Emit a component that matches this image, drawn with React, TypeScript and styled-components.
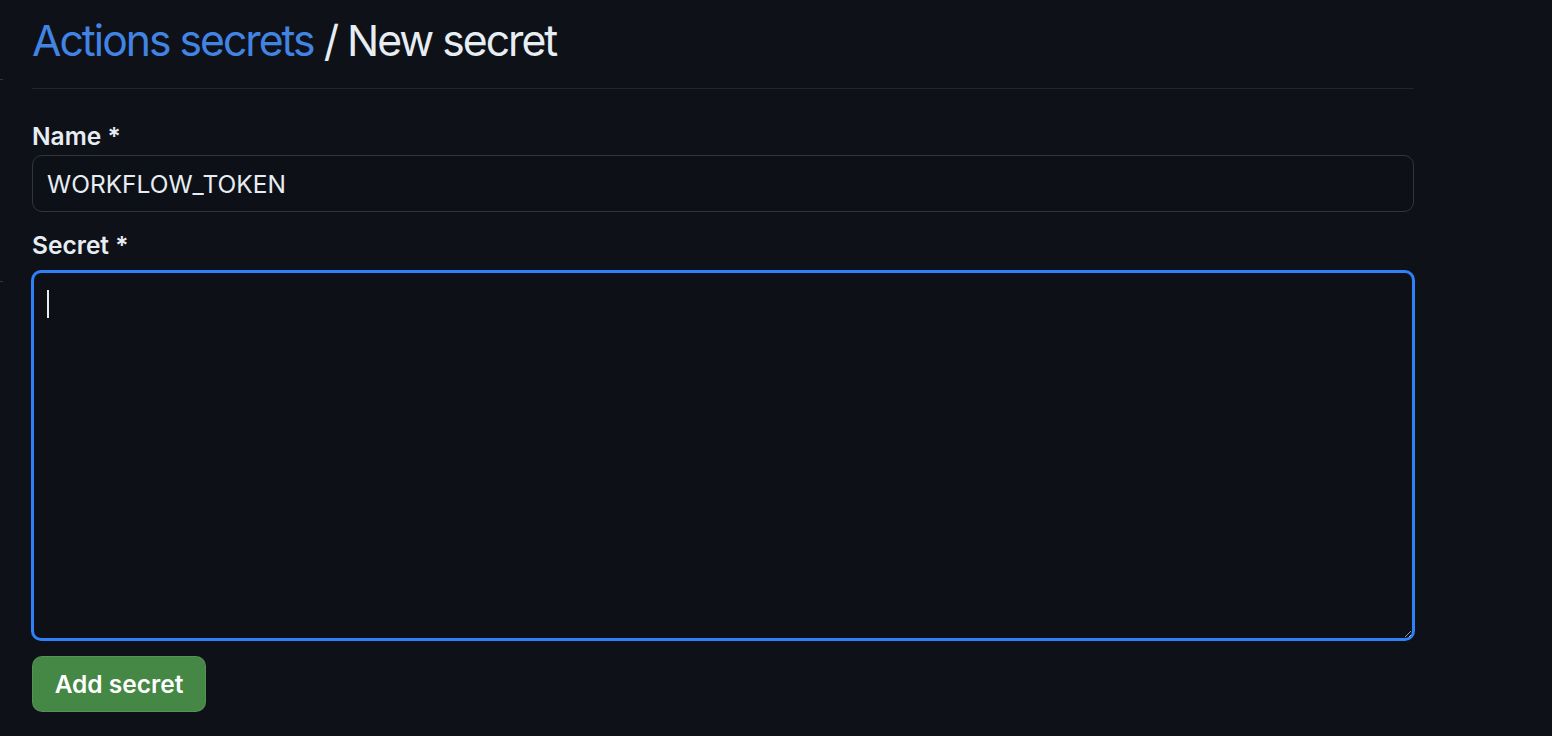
import React from "react";
import styled, { createGlobalStyle } from "styled-components";

const Global = createGlobalStyle`
  html, body { margin: 0; padding: 0; background: #0e1117; color-scheme: dark; }
  body { font-family: Inter, "Noto Sans", "Liberation Sans", sans-serif; color: #e6edf3; }
  * { box-sizing: border-box; }
`;

const Page = styled.div`
  position: relative;
  min-height: 736px;
  padding: 0 138px 0 32px;
`;

const Tick = styled.span<{ $top: number }>`
  position: absolute;
  left: 0;
  top: ${(p) => p.$top}px;
  width: 3px;
  height: 1px;
  background: #30363d;
`;

const Subhead = styled.div`
  padding-top: 14px;
  height: 89px;
  border-bottom: 1px solid #21262d;
`;

const Heading = styled.h1`
  margin: 0;
  font-size: 42.7px;
  font-weight: 400;
  line-height: 53px;
  letter-spacing: -2px;
  color: #e6edf3;
  white-space: nowrap;
`;

const Crumb = styled.a`
  color: #4184e4;
  text-decoration: none;
`;

const Form = styled.form`
  display: flex;
  flex-direction: column;
`;

const Label = styled.label<{ $top: number; $bottom: number }>`
  display: block;
  margin-top: ${(p) => p.$top}px;
  margin-bottom: ${(p) => p.$bottom}px;
  font-size: 24.5px;
  font-weight: 600;
  line-height: 30px;
  color: #e6edf3;
`;

const Input = styled.input`
  display: block;
  width: 100%;
  height: 57px;
  padding: 0 14px;
  font-family: inherit;
  font-size: 24.5px;
  color: #e6edf3;
  background: #0d1117;
  border: 1px solid #30363d;
  border-radius: 10px;
  outline: none;
`;

const AreaWrap = styled.div`
  position: relative;
`;

const Area = styled.textarea`
  display: block;
  width: 100%;
  height: 369px;
  padding: 15px;
  font-family: inherit;
  font-size: 24.5px;
  color: #e6edf3;
  background: #0d1117;
  border: 2px solid #2f81f7;
  box-shadow: 0 0 0 1px #2f81f7;
  border-radius: 9px;
  outline: none;
  resize: vertical;
`;

const Caret = styled.span`
  position: absolute;
  left: 15px;
  top: 19px;
  width: 2px;
  height: 28px;
  background: #e6edf3;
`;

const Button = styled.button`
  align-self: flex-start;
  margin-top: 16px;
  height: 56px;
  width: 174px;
  padding: 0;
  font-family: inherit;
  font-size: 24.5px;
  font-weight: 600;
  color: #ffffff;
  background: #458744;
  border: 1px solid rgba(240, 246, 252, 0.1);
  border-radius: 10px;
  cursor: pointer;
`;

export default function App() {
  return (
    <Page>
      <Global />
      <Tick $top={79} />
      <Tick $top={281} />
      <Subhead>
        <Heading>
          <Crumb href="#">Actions secrets</Crumb> / New secret
        </Heading>
      </Subhead>
      <Form onSubmit={(e) => e.preventDefault()}>
        <Label $top={32} $bottom={4}>Name *</Label>
        <Input defaultValue="WORKFLOW_TOKEN" />
        <Label $top={18} $bottom={11}>Secret *</Label>
        <AreaWrap>
          <Area />
          <Caret />
        </AreaWrap>
        <Button type="submit">Add secret</Button>
      </Form>
    </Page>
  );
}
